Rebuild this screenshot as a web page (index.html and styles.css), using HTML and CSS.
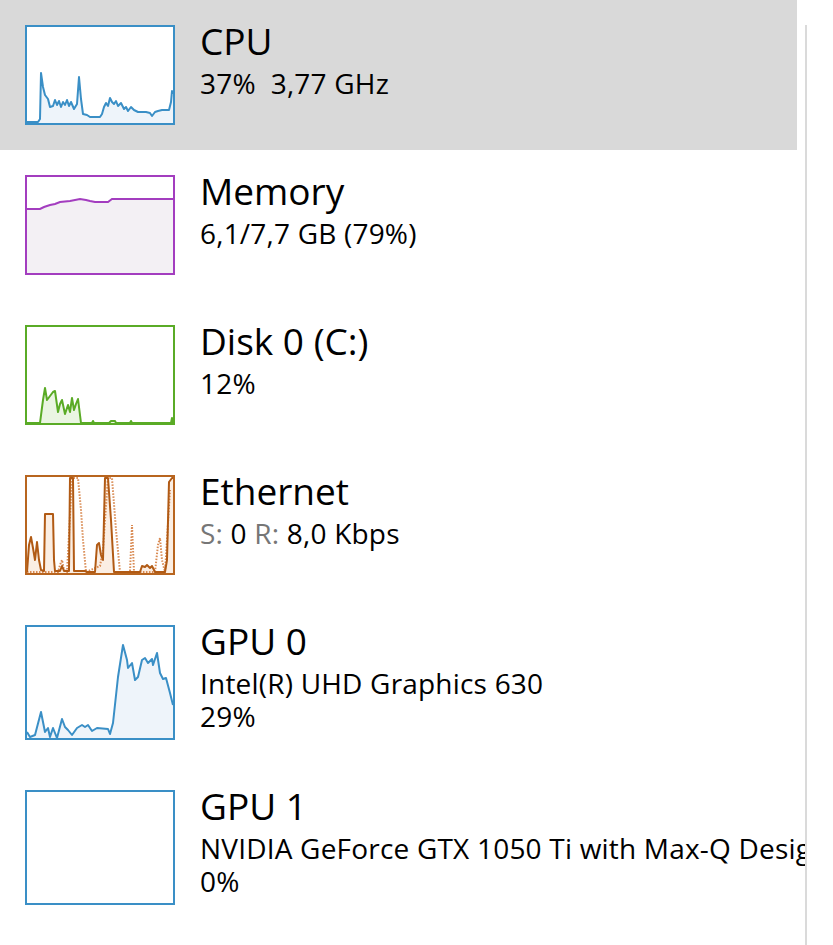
FILE: index.html
```html
<!DOCTYPE html>
<html>
<head>
<meta charset="utf-8">
<link rel="stylesheet" href="styles.css">
</head>
<body>
<div class="page">
  <div class="list">
    <div class="row selected">
      <div class="chart cpu">
        <svg viewBox="27 28 146 96" preserveAspectRatio="none">
          <polygon class="fill-cpu" points="27,124 38,123 40,120 41,74 43,88 45,96 48,100 50,108 53,107 55,101 57,106 59,102 61,108 63,103 65,106 67,101 69,107 71,103 74,110 77,105 79,78 81,100 83,115 87,116 90,118 100,118 102,115 104,108 106,104 108,107 110,99 112,103 114,105 116,102 118,107 121,104 124,110 126,108 128,112 131,108 134,111 138,113 142,113 146,113 150,114 152,117 155,113 158,112 162,111 166,111 169,111 171,103 172,92 173,95 173,124"/>
          <polyline class="line-cpu" points="27,123 38,123 40,120 41,74 43,88 45,96 48,100 50,108 53,107 55,101 57,106 59,102 61,108 63,103 65,106 67,101 69,107 71,103 74,110 77,105 79,78 81,100 83,115 87,116 90,118 100,118 102,115 104,108 106,104 108,107 110,99 112,103 114,105 116,102 118,107 121,104 124,110 126,108 128,112 131,108 134,111 138,113 142,113 146,113 150,114 152,117 155,113 158,112 162,111 166,111 169,111 171,103 172,92 173,95"/>
        </svg>
      </div>
      <div class="info">
        <div class="title">CPU</div>
        <div class="subs">
          <div class="sub">37%&nbsp;&nbsp;3,77 GHz</div>
        </div>
      </div>
    </div>

    <div class="row">
      <div class="chart mem">
        <svg viewBox="27 177 146 96" preserveAspectRatio="none">
          <polygon class="fill-mem" points="27,209 40,209 44,207 50,205 55,204 60,202 70,201 80,199 86,200 90,201 95,202 108,202 112,199 173,199 173,273 27,273"/>
          <polyline class="line-mem" points="27,209 40,209 44,207 50,205 55,204 60,202 70,201 80,199 86,200 90,201 95,202 108,202 112,199 173,199"/>
        </svg>
      </div>
      <div class="info">
        <div class="title">Memory</div>
        <div class="subs">
          <div class="sub">6,1/7,7 GB (79%)</div>
        </div>
      </div>
    </div>

    <div class="row">
      <div class="chart disk">
        <svg viewBox="27 327 146 96" preserveAspectRatio="none">
          <polygon class="fill-disk" points="27,423 40,423 43,400 45,388 47,400 50,396 53,392 55,391 58,412 60,404 62,400 65,414 68,405 70,412 72,398 74,410 76,404 78,399 81,423 92,423 93,421 94,423 109,423 111,421 115,421 116,423 130,423 131,421 132,423 171,423 172,418 173,423"/>
          <polyline class="line-disk" points="27,423 40,423 43,400 45,388 47,400 50,396 53,392 55,391 58,412 60,404 62,400 65,414 68,405 70,412 72,398 74,410 76,404 78,399 81,423 92,423 93,421 94,423 109,423 111,421 115,421 116,423 130,423 131,421 132,423 171,423 172,418 173,423"/>
        </svg>
      </div>
      <div class="info">
        <div class="title">Disk 0 (C:)</div>
        <div class="subs">
          <div class="sub">12%</div>
        </div>
      </div>
    </div>

    <div class="row">
      <div class="chart eth">
        <svg viewBox="27 477 146 96" preserveAspectRatio="none">
          <polygon class="fill-eth" points="27,573 27,572 29,545 31,537 33,548 35,560 37,542 39,560 41,570 44,571 45,514 53,514 54,560 55,571 60,571 62,566 64,571 69,571 70,478 73,478 74,571 85,571 87,572 95,572 97,545 99,543 101,555 103,560 105,478 108,478 111,520 114,572 140,572 142,566 145,567 147,565 150,568 152,566 155,572 165,572 167,560 169,482 172,478 173,478 173,573"/>
          <polyline class="send-eth" points="27,572 58,572 60,565 62,560 64,570 67,572 72,478 78,478 81,510 83,540 86,572 100,566 103,550 105,520 108,478 112,478 116,530 120,572 130,572 132,525 134,572 155,572 158,545 160,538 162,560 165,572 167,540 170,490"/>
          <polyline class="line-eth" points="27,572 29,545 31,537 33,548 35,560 37,542 39,560 41,570 44,571 45,514 53,514 54,560 55,571 60,571 62,566 64,571 69,571 70,478 73,478 74,571 85,571 87,572 95,572 97,545 99,543 101,555 103,560 105,478 108,478 111,520 114,572 140,572 142,566 145,567 147,565 150,568 152,566 155,572 165,572 167,560 169,482 172,478 173,478"/>
        </svg>
      </div>
      <div class="info">
        <div class="title">Ethernet</div>
        <div class="subs">
          <div class="sub"><span class="dim">S:</span> 0 <span class="dim">R:</span> 8,0 Kbps</div>
        </div>
      </div>
    </div>

    <div class="row">
      <div class="chart gpu">
        <svg viewBox="27 627 146 111" preserveAspectRatio="none">
          <polygon class="fill-cpu" points="27,738 27,732 30,737 35,735 41,712 45,732 48,728 50,737 53,728 57,738 62,719 65,727 68,730 72,735 77,728 82,725 85,727 88,725 92,731 97,728 108,729 110,734 113,723 118,677 123,645 127,660 128,668 132,663 135,680 138,677 142,660 145,658 148,663 152,659 153,665 157,653 160,673 163,679 166,678 170,693 173,705 173,738"/>
          <polyline class="line-cpu" points="27,732 30,737 35,735 41,712 45,732 48,728 50,737 53,728 57,738 62,719 65,727 68,730 72,735 77,728 82,725 85,727 88,725 92,731 97,728 108,729 110,734 113,723 118,677 123,645 127,660 128,668 132,663 135,680 138,677 142,660 145,658 148,663 152,659 153,665 157,653 160,673 163,679 166,678 170,693 173,705"/>
        </svg>
      </div>
      <div class="info">
        <div class="title">GPU 0</div>
        <div class="subs">
          <div class="sub">Intel(R) UHD Graphics 630</div>
          <div class="sub">29%</div>
        </div>
      </div>
    </div>

    <div class="row">
      <div class="chart gpu"></div>
      <div class="info">
        <div class="title">GPU 1</div>
        <div class="subs">
          <div class="sub">NVIDIA GeForce GTX 1050 Ti with Max-Q Design</div>
          <div class="sub">0%</div>
        </div>
      </div>
    </div>
  </div>
  <div class="separator"></div>
</div>
</body>
</html>
```

FILE: styles.css
```css
html, body {
  margin: 0;
  padding: 0;
  background: #ffffff;
}

body {
  font-family: "Open Sans", "Noto Sans", "DejaVu Sans", sans-serif;
  color: #000000;
}

.page {
  display: flex;
  min-height: 945px;
  width: 833px;
}

.list {
  width: 805px;
  overflow: hidden;
  flex: none;
}

.separator {
  width: 2px;
  margin-top: 25px;
  background: #dadada;
  flex: none;
}

.row {
  display: flex;
  align-items: flex-start;
  width: 797px;
  box-sizing: border-box;
  padding: 19px 0 25px 25px;
  white-space: nowrap;
}

.row.selected {
  background: #d9d9d9;
}

.chart {
  flex: none;
  width: 150px;
  height: 100px;
  margin-top: 6px;
  box-sizing: border-box;
  border: 2px solid #3a8fc6;
  background: #ffffff;
}

.chart svg {
  display: block;
  width: 146px;
  height: 100%;
}

.chart.gpu {
  height: 115px;
}

.chart.mem {
  border-color: #a33dbf;
}

.chart.disk {
  border-color: #5aab26;
}

.chart.eth {
  border-color: #b8651f;
}

.info {
  margin-left: 25px;
  overflow: visible;
}

.title {
  font-size: 37px;
  line-height: 44px;
}

.subs {
  padding-top: 4px;
}

.sub {
  font-size: 28px;
  line-height: 33px;
  letter-spacing: 0.2px;
}

.dim {
  color: #767676;
}

.fill-cpu {
  fill: #eef4fa;
  stroke: none;
}

.line-cpu {
  fill: none;
  stroke: #3a8fc6;
  stroke-width: 2;
  stroke-linejoin: round;
}

.fill-mem {
  fill: #f3f0f4;
  stroke: none;
}

.line-mem {
  fill: none;
  stroke: #a33dbf;
  stroke-width: 2;
}

.fill-disk {
  fill: #eaf5e2;
  stroke: none;
}

.line-disk {
  fill: none;
  stroke: #5aab26;
  stroke-width: 2;
  stroke-linejoin: round;
}

.fill-eth {
  fill: #fbeee3;
  stroke: none;
}

.line-eth {
  fill: none;
  stroke: #b15a14;
  stroke-width: 2;
  stroke-linejoin: round;
}

.send-eth {
  fill: none;
  stroke: #d98a52;
  stroke-width: 2;
  stroke-dasharray: 1.5 1.5;
}
```
